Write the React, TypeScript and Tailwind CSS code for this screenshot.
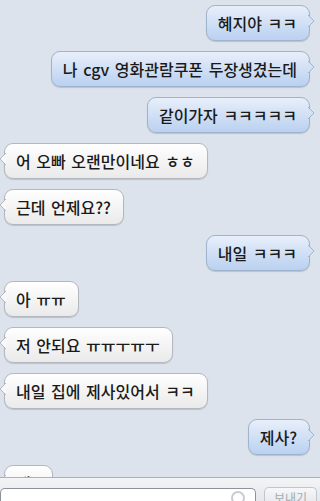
const messages: { text: string; me: boolean }[] = [
  { text: '혜지야 ㅋㅋ', me: true },
  { text: '나 cgv 영화관람쿠폰 두장생겼는데', me: true },
  { text: '같이가자 ㅋㅋㅋㅋㅋ', me: true },
  { text: '어 오빠 오랜만이네요 ㅎㅎ', me: false },
  { text: '근데 언제요??', me: false },
  { text: '내일 ㅋㅋㅋ', me: true },
  { text: '아 ㅠㅠ', me: false },
  { text: '저 안되요 ㅠㅠㅜㅠㅜ', me: false },
  { text: '내일 집에 제사있어서 ㅋㅋ', me: false },
  { text: '제사?', me: true },
  { text: '네..', me: false },
]

function Tail({ me }: { me: boolean }) {
  return (
    <svg
      width="7"
      height="12"
      viewBox="0 0 7 12"
      className={me ? 'absolute -right-[6px] top-[9px]' : 'absolute -left-[6px] top-[9px]'}
    >
      {me ? (
        <path d="M0 0 L6 6 L0 12" fill="#d3e2f6" stroke="#9fb3cc" strokeWidth="1" />
      ) : (
        <path d="M7 0 L1 6 L7 12" fill="#f8f8f8" stroke="#b4b8be" strokeWidth="1" />
      )}
    </svg>
  )
}

function Bubble({ text, me }: { text: string; me: boolean }) {
  return (
    <div className={me ? 'flex justify-end pr-[10px]' : 'flex justify-start pl-[4px]'}>
      <div
        className={
          me
            ? 'relative h-[36px] pl-[11px] pr-[12px] flex items-center rounded-[9px] border border-[#9fb3cc] bg-gradient-to-b from-[#e8effa] to-[#bad1f0] shadow-[0_1px_1px_rgba(0,0,0,0.15)]'
            : 'relative h-[36px] pl-[11px] pr-[12px] flex items-center rounded-[9px] border border-[#b4b8be] bg-gradient-to-b from-white to-[#eaeaea] shadow-[0_1px_1px_rgba(0,0,0,0.15)]'
        }
      >
        <Tail me={me} />
        <span className="text-[16px] font-medium leading-none text-[#1a1a1a] whitespace-nowrap [word-spacing:2px]">
          {text}
        </span>
      </div>
    </div>
  )
}

export default function App() {
  return (
    <div
      className="w-[320px] h-[501px] overflow-hidden flex flex-col bg-[#dce3ed]"
      style={{ fontFamily: '"Noto Sans CJK KR", "Liberation Sans", sans-serif' }}
    >
      <div className="flex-1 overflow-hidden flex flex-col gap-[10px] pt-[5px]">
        {messages.map((m, i) => (
          <Bubble key={i} text={m.text} me={m.me} />
        ))}
      </div>

      {/* Input bar */}
      <div className="h-[24px] shrink-0 border-t border-[#aab1bb] bg-gradient-to-b from-[#f3f4f6] to-[#e4e7eb] flex items-end gap-[8px] pr-[3px]">
        <div className="relative w-[256px] h-[13px] rounded-t-[5px] border border-b-0 border-[#8d929a] bg-white">
          <div className="absolute right-[10px] top-[2px] w-[14px] h-[14px] rounded-full border-2 border-[#c9cdd2]" />
        </div>
        <div className="w-[53px] h-[14px] rounded-t-[5px] border border-b-0 border-[#c2c6cc] bg-gradient-to-b from-[#f6f7f8] to-[#e9ebee] flex justify-center overflow-hidden">
          <span className="text-[12px] leading-none text-[#a6abb2] pt-[4px]">보내기</span>
        </div>
      </div>
    </div>
  )
}
